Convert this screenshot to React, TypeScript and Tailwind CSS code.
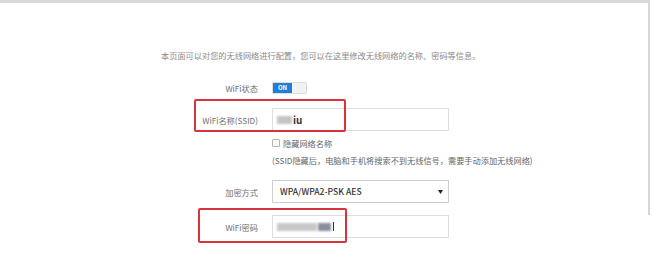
import React from "react";

const font = { fontFamily: '"Noto Sans CJK SC", "Noto Sans", sans-serif' };

const Label: React.FC<{ children: React.ReactNode }> = ({ children }) => (
  <div className="w-[258px] text-right text-[8.2px] leading-[12px] text-[#707070]">{children}</div>
);

const App: React.FC = () => {
  return (
    <div className="w-[652px] h-[262px] bg-white overflow-hidden relative" style={font}>
      <div className="w-[650px] h-[215px] border-t-[3px] border-r-2 border-t-[#dadada] border-r-[#d6d6d6] pt-[46px]">
        <p className="pl-[161px] text-[8.2px] leading-[12px] text-[#8a8a8a] whitespace-nowrap">
          本页面可以对您的无线网络进行配置，您可以在这里修改无线网络的名称、密码等信息。
        </p>

        {/* wifi status */}
        <div className="mt-[21px] flex items-center gap-[14px] h-[12px]">
          <Label>WiFi状态</Label>
          <div className="flex h-[12px] w-[35px] border border-[#dcdcdc] rounded-[1px] overflow-hidden">
            <div className="w-[19px] bg-[#1f7fd8] text-white text-[6px] leading-[10px] text-center font-bold">ON</div>
            <div className="flex-1 bg-[#f2f2f2]" />
          </div>
        </div>

        {/* ssid */}
        <div className="mt-[14px] flex items-center gap-[14px] h-[23px]">
          <Label>WiFi名称(SSID)</Label>
          <div className="w-[177px] h-[23px] border border-[#dedede] flex items-center pl-[4px]">
            <span className="w-[15px] h-[8px] bg-[#c4c4c4] blur-[1px]" />
            <span className="text-[10px] font-bold text-[#333] leading-none ml-[1px]">iu</span>
          </div>
        </div>

        <div className="mt-[6px] flex items-center gap-[14px] h-[12px]">
          <div className="w-[258px]" />
          <div className="flex items-center gap-[3px]">
            <span className="w-[8px] h-[8px] border border-[#b5b5b5] rounded-[1px] bg-[#f7f7f7]" />
            <span className="text-[8.2px] leading-[12px] text-[#666]">隐藏网络名称</span>
          </div>
        </div>

        <div className="mt-[5px] flex items-center gap-[14px] h-[12px]">
          <div className="w-[258px]" />
          <span className="text-[8.2px] leading-[12px] text-[#666] whitespace-nowrap">
            (SSID隐藏后，电脑和手机将搜索不到无线信号，需要手动添加无线网络)
          </span>
        </div>

        {/* encryption */}
        <div className="mt-[14px] flex items-center gap-[14px] h-[23px]">
          <Label>加密方式</Label>
          <div className="w-[177px] h-[23px] border border-[#cfcfcf] flex items-center justify-between pl-[7px] pr-[5px]">
            <span className="text-[8.6px] text-[#333] font-medium">WPA/WPA2-PSK AES</span>
            <svg width="5" height="4" viewBox="0 0 5 4">
              <path d="M0 0h5L2.5 4z" fill="#222" />
            </svg>
          </div>
        </div>

        {/* password */}
        <div className="mt-[12px] flex items-center gap-[14px] h-[23px]">
          <Label>WiFi密码</Label>
          <div className="w-[177px] h-[23px] border border-[#dedede] flex items-center pl-[4px]">
            <span className="w-[40px] h-[8px] bg-[#c8c8c8] blur-[1px]" />
            <span className="w-[13px] h-[8px] bg-[#8a8fa0] blur-[1px] ml-[1px]" />
            <span className="w-[1px] h-[9px] bg-[#333] ml-[2px]" />
          </div>
        </div>
      </div>

      {/* annotation boxes */}
      <div className="absolute left-[194px] top-[99px] w-[152px] h-[33px] border-2 border-[#d8333a] rounded-[2px]" />
      <div className="absolute left-[198px] top-[208px] w-[149px] h-[35px] border-2 border-[#d8333a] rounded-[2px]" />
    </div>
  );
};

export default App;
